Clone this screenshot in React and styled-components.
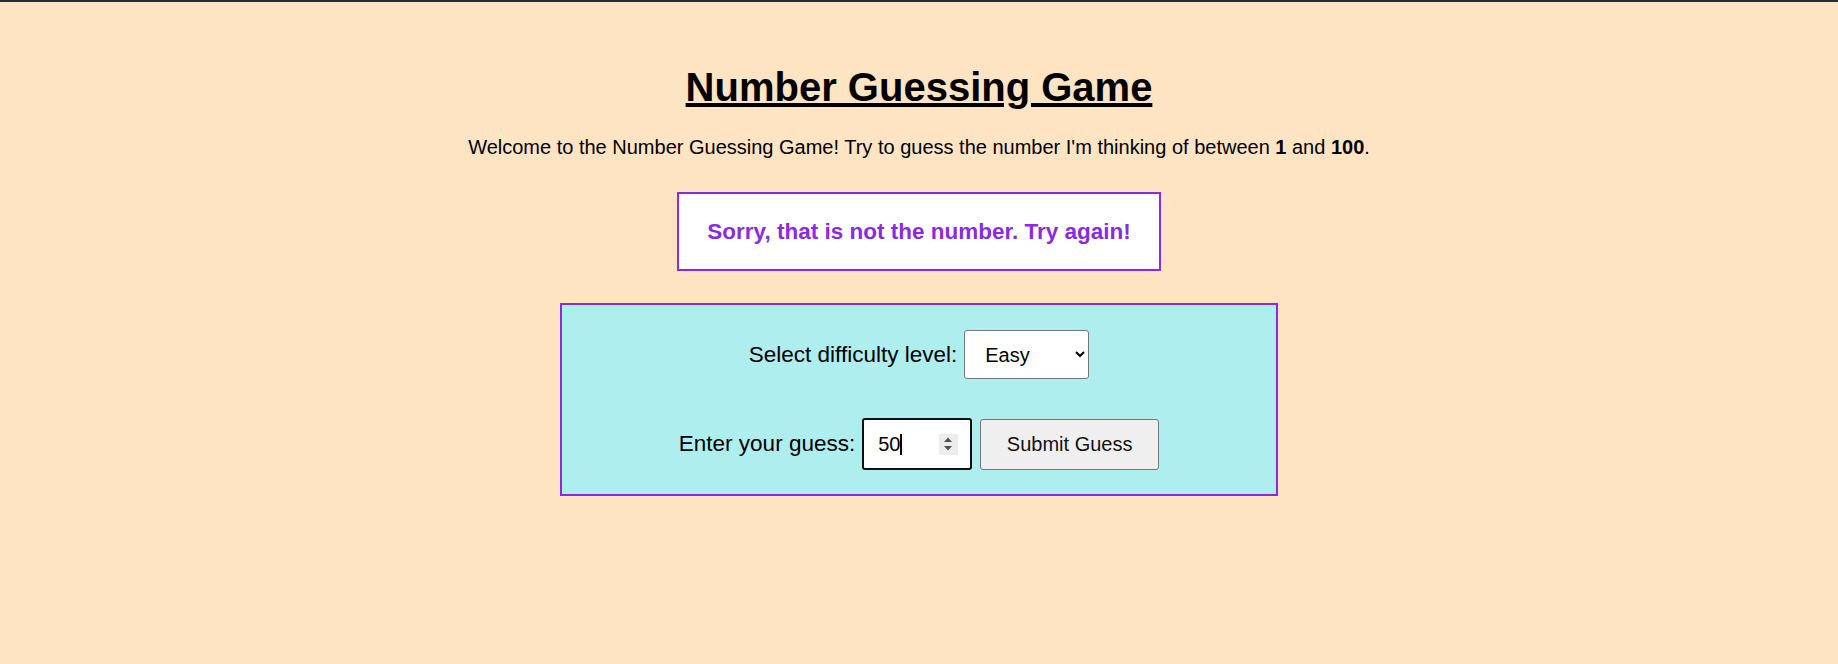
import React, { useState } from 'react'
import styled, { createGlobalStyle } from 'styled-components'

const GlobalStyle = createGlobalStyle`
  html, body {
    margin: 0;
    padding: 0;
    background: #ffe4c4;
  }
  body {
    font-family: "Liberation Sans", Arial, sans-serif;
  }
`

const Page = styled.div`
  min-height: 100vh;
  box-sizing: border-box;
  background: #ffe4c4;
  border-top: 2px solid #2b2b2b;
  padding-top: 62px;
  display: flex;
  flex-direction: column;
  align-items: center;
  color: #000;
`

const Title = styled.h1`
  margin: 0 0 26px;
  font-size: 40px;
  line-height: 46px;
  font-weight: bold;
  text-decoration: underline;
`

const Intro = styled.p`
  margin: 0 0 33px;
  font-size: 20px;
  line-height: 23px;
  text-align: center;
`

const Message = styled.div`
  margin: 0 0 32px;
  padding: 24px 28px;
  background: #fff;
  border: 2px solid #8a2be2;
  color: #8a2be2;
  font-size: 22.5px;
  line-height: 27px;
  font-weight: bold;
`

const Panel = styled.div`
  width: 718px;
  box-sizing: border-box;
  background: #afeeee;
  border: 2px solid #8a2be2;
  padding: 25px 0 24px;
  display: flex;
  flex-direction: column;
  align-items: center;
  gap: 39px;
`

const Row = styled.div`
  display: flex;
  align-items: center;
  gap: ${(p) => p.$gap || 7}px;
`

const Label = styled.label`
  font-size: 22.5px;
  line-height: 26px;
`

const Select = styled.select`
  width: 125px;
  height: 49px;
  box-sizing: border-box;
  padding: 0 8px 0 16px;
  font-family: inherit;
  font-size: 20px;
  color: #000;
  background: #fff;
  border: 1px solid #767676;
  border-radius: 3px;
`

const GuessBox = styled.div`
  width: 110px;
  height: 52px;
  box-sizing: border-box;
  border: 2px solid #101010;
  border-radius: 3px;
  background: #fff;
  display: flex;
  align-items: center;
  padding: 0 12px 0 14px;
`

const GuessInput = styled.input`
  width: 22px;
  padding: 0;
  border: none;
  outline: none;
  background: transparent;
  font-family: inherit;
  font-size: 20px;
  color: #000;
  caret-color: transparent;
`

const Caret = styled.span`
  width: 2px;
  height: 21px;
  background: #000;
`

const Spacer = styled.span`
  flex: 1;
`

const SubmitButton = styled.button`
  width: 179px;
  height: 51px;
  box-sizing: border-box;
  margin-left: 1px;
  background: #efefef;
  border: 1px solid #767676;
  border-radius: 3px;
  font-family: inherit;
  font-size: 20px;
  color: #111;
  cursor: pointer;
`

const Spinner = () => (
  <svg width="19" height="21" viewBox="0 0 19 21">
    <rect width="19" height="21" fill="#ececec" />
    <polygon points="5,8 13,8 9,3.5" fill="#505050" />
    <polygon points="5,12 13,12 9,16.5" fill="#505050" />
  </svg>
)

export default function App() {
  const [level, setLevel] = useState('easy')
  const [guess, setGuess] = useState('50')

  return (
    <Page>
      <GlobalStyle />
      <Title>Number Guessing Game</Title>
      <Intro>
        Welcome to the Number Guessing Game! Try to guess the number I'm thinking of between <b>1</b> and <b>100</b>.
      </Intro>
      <Message>Sorry, that is not the number. Try again!</Message>
      <Panel>
        <Row>
          <Label htmlFor="level">Select difficulty level:</Label>
          <Select id="level" value={level} onChange={(e) => setLevel(e.target.value)}>
            <option value="easy">Easy</option>
            <option value="medium">Medium</option>
            <option value="hard">Hard</option>
          </Select>
        </Row>
        <Row>
          <Label htmlFor="guess">Enter your guess:</Label>
          <GuessBox>
            <GuessInput id="guess" value={guess} onChange={(e) => setGuess(e.target.value)} />
            <Caret />
            <Spacer />
            <Spinner />
          </GuessBox>
          <SubmitButton>Submit Guess</SubmitButton>
        </Row>
      </Panel>
    </Page>
  )
}
